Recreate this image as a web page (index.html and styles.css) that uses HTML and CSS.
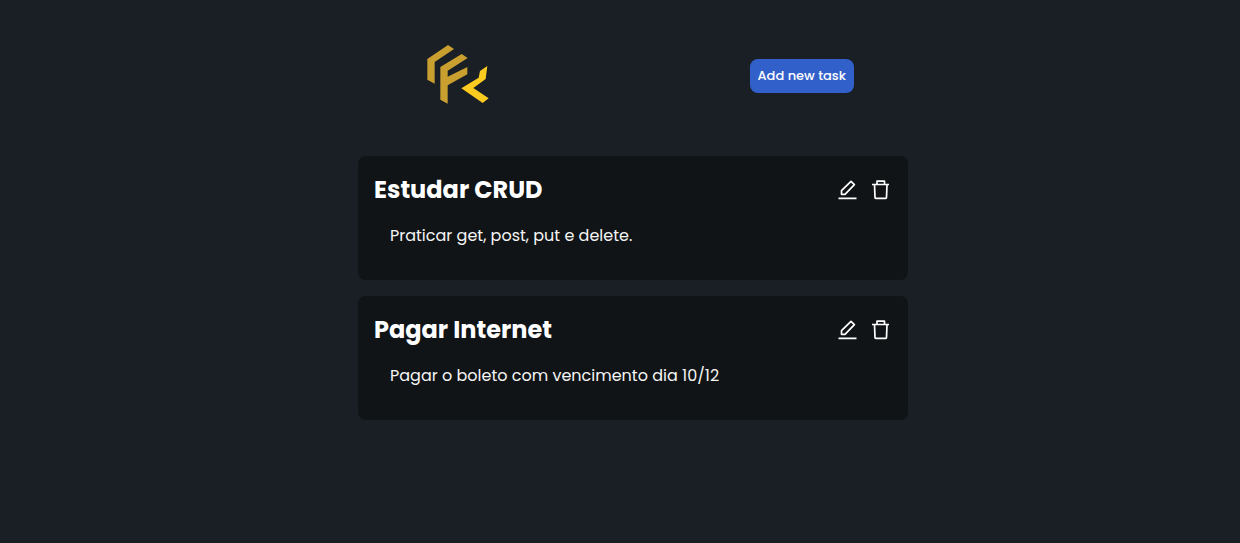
FILE: index.html
```html
<!DOCTYPE html>
<html lang="pt-BR">
<head>
<meta charset="utf-8">
<meta name="viewport" content="width=device-width, initial-scale=1">
<title>Tasks</title>
<link rel="stylesheet" href="styles.css">
</head>
<body>
<div class="page">
  <header class="header">
    <svg class="logo" viewBox="27 26 186 176" role="img" aria-label="Logo">
      <path fill="#c9a02f" d="M28 69 90 27l18 12-58 39v65l-22-12zM67 93l64-39 18 12-60 38v18l59-29v22l-59 33v55l-22-12z"/>
      <path fill="#fccb1f" d="m186 105 22-15-5 39-37 27 46 31-18 14-64-44 52-32z"/>
    </svg>
    <button class="add" type="button">Add new task</button>
  </header>
  <main class="tasks">
    <article class="task">
      <div class="task-head">
        <h2 class="title">Estudar CRUD</h2>
        <div class="actions">
          <button class="icon" type="button" aria-label="Edit"><svg viewBox="0 0 20 20"><path d="M.5 18.300h18M3.500 14.300v-3.600L13 1.300l3.400 3.300L7 14.300z"/></svg></button>
          <button class="icon" type="button" aria-label="Delete"><svg viewBox="0 0 20 20"><path d="M1 4.500h17M6 4.500V1.200h7.500v3.300M3.500 4.500l.5 13q0 .8.800.8h9.900q.8 0 .8-.8l.5-13"/></svg></button>
        </div>
      </div>
      <p class="text">Praticar get, post, put e delete.</p>
    </article>
    <article class="task">
      <div class="task-head">
        <h2 class="title">Pagar Internet</h2>
        <div class="actions">
          <button class="icon" type="button" aria-label="Edit"><svg viewBox="0 0 20 20"><path d="M.5 18.300h18M3.500 14.300v-3.600L13 1.300l3.400 3.300L7 14.300z"/></svg></button>
          <button class="icon" type="button" aria-label="Delete"><svg viewBox="0 0 20 20"><path d="M1 4.500h17M6 4.500V1.200h7.500v3.300M3.500 4.500l.5 13q0 .8.800.8h9.900q.8 0 .8-.8l.5-13"/></svg></button>
        </div>
      </div>
      <p class="text">Pagar o boleto com vencimento dia 10/12</p>
    </article>
  </main>
</div>
</body>
</html>
```
FILE: styles.css
```css
* { box-sizing: border-box; }
body {
  margin: 0;
  background: #1a1e25;
  color: #fff;
  font-family: Poppins, Inter, sans-serif;
}
.page {
  display: flex;
  flex-direction: column;
  align-items: center;
  gap: 48px;
  padding: 44px 0 44px 26px;
}
.header {
  display: flex;
  justify-content: space-between;
  align-items: center;
  width: 100%;
  max-width: 550px;
  padding: 0 54px 0 69px;
}
.logo { width: 62px; height: 60px; margin-bottom: 4px; }
.add {
  padding: 7px 8px;
  border: 0;
  border-radius: 8px;
  background: #3260cb;
  color: #fff;
  font: 500 13px/20px Poppins, Inter, sans-serif;
  cursor: pointer;
}
.tasks {
  display: flex;
  flex-direction: column;
  gap: 16px;
  width: 100%;
  max-width: 550px;
}
.task {
  padding: 16px 16px 32px;
  border-radius: 8px;
  background: #101416;
}
.task-head {
  display: flex;
  justify-content: space-between;
  align-items: center;
}
.title { margin: 0; font-size: 24px; font-weight: 700; line-height: 36px; }
.actions { display: flex; gap: 13px; padding-right: 1px; }
.icon {
  display: flex;
  padding: 0;
  border: 0;
  background: none;
  cursor: pointer;
}
.icon svg {
  width: 20px;
  height: 20px;
  fill: none;
  stroke: #fff;
  stroke-width: 1.7;
  stroke-linejoin: round;
}
.text {
  margin: 16px 16px 0;
  color: #f5f5f5;
  font-size: 16px;
  line-height: 24px;
}
```
